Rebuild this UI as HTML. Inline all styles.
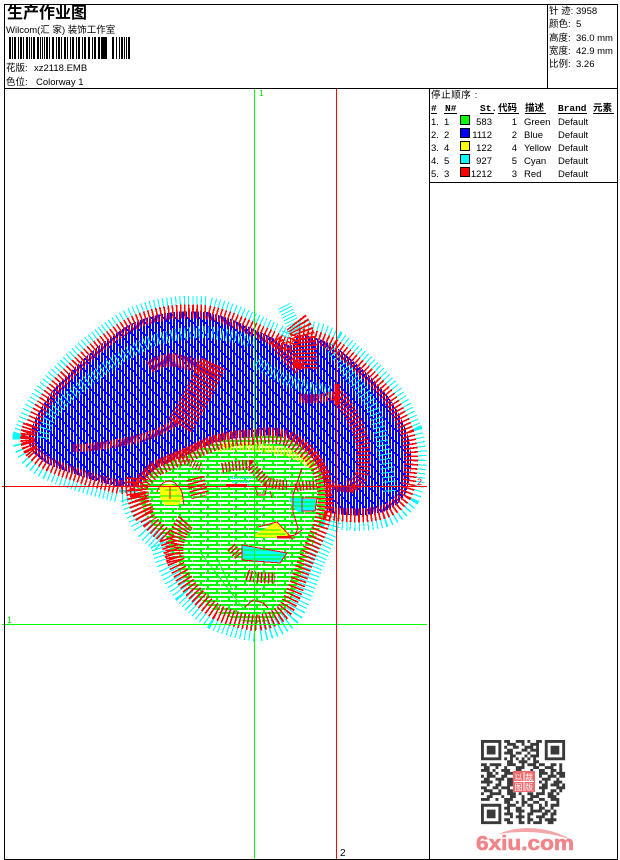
<!DOCTYPE html>
<html><head><meta charset="utf-8"><style>
html,body{margin:0;padding:0;background:#fff;width:620px;height:860px;overflow:hidden}
svg{display:block}
text{font-family:"Liberation Sans","Noto Sans CJK SC",sans-serif;font-size:9.5px;fill:#000}
.b{font-weight:bold}
.m{font-family:"Liberation Mono",monospace;font-weight:bold}
</style></head><body>
<svg width="620" height="860" viewBox="0 0 620 860" xmlns="http://www.w3.org/2000/svg" shape-rendering="crispEdges">
<defs>
<pattern id="bl" width="12" height="12" patternUnits="userSpaceOnUse">
<rect width="12" height="12" fill="#0000ff"/>
<path fill="#fff" d="M1 0h1v10H1zM4 0h1v2H4zM4 4h1v8H4zM7 0h1v5H7zM7 7h1v5H7zM10 0h1v8h-1zM10 10h1v2h-1z"/>
</pattern>
<pattern id="gr" width="28" height="8" patternUnits="userSpaceOnUse">
<rect width="28" height="8" fill="#00ff00"/>
<path fill="#fff" d="M0 2h11v2H0zM13 2h15v2H13zM0 6h4v2H0zM6 6h14v2H6zM22 6h6v2h-6zM24 0h1v2h-1zM9 4h1v2H9z"/>
</pattern>
<path id="body" d="M28 438C33 425 36 415 43 405C50 393 58 384 67 375C78 364 88 354 100 345C111 337 121 329 133 323C144 318 155 315 167 313C180 311 194 311 207 312C219 315 229 318 240 323C251 328 262 333 273 338C280 342 286 346 293 345L297 335C310 335 322 339 333 345C343 352 351 359 360 367C370 376 379 385 387 395C396 407 402 419 407 432C410 443 412 454 411 465C410 476 409 486 405 495C399 504 392 509 383 512C372 515 361 516 350 515C342 515 334 514 327 512C325 500 324 487 322 475C319 468 315 461 310 455C303 448 295 442 287 438C275 435 264 435 253 437C241 437 229 439 217 442C206 446 197 450 187 455C177 459 167 463 157 468C150 473 146 479 140 485C133 486 127 487 120 487C107 484 95 481 83 477C72 473 61 470 50 465C44 462 38 458 33 452C30 447 28 443 28 438Z"/>
<path id="head" d="M138 495C141 504 145 514 150 522C155 528 161 532 167 538C170 546 172 554 175 562C179 571 184 580 190 588C198 597 207 606 217 612C230 618 243 622 257 623C267 622 276 618 283 612C288 607 290 601 293 595C298 583 302 570 307 558C311 548 316 538 320 528C322 521 324 515 325 508C326 497 325 485 322 475C319 468 315 461 310 455C303 448 295 442 287 438C275 435 264 435 253 437C241 437 229 439 217 442C206 446 197 450 187 455C177 459 167 463 157 468C150 473 144 480 140 485C138 488 137 492 138 495Z"/>
</defs>
<rect width="620" height="860" fill="#fff"/>

<!-- embroidery -->
<g fill="none">
<use href="#body" stroke="#00ffff" stroke-width="31" stroke-dasharray="1.1 2.9"/>
<use href="#head" stroke="#00ffff" stroke-width="37" stroke-dasharray="1.1 2.9"/>
<use href="#body" fill="url(#bl)"/>
<path d="M284 306L298 334" stroke="#00ffff" stroke-width="14" stroke-dasharray="1 2.2"/>
<!-- inner cyan speckle -->
<g stroke="#00ffff" stroke-dasharray="1 3.6">
<path d="M43 438C45 425 50 416 57 408C70 395 85 383 100 372C115 360 132 350 150 342C167 336 183 333 200 332C220 333 237 337 253 342" stroke-width="12"/>
<path d="M257 362C270 372 285 380 300 385C312 388 322 390 333 392" stroke-width="12"/>
<path d="M347 372C357 383 366 395 373 408C378 420 381 432 383 445C386 462 389 478 390 495" stroke-width="13"/>
<path d="M330 345L348 372" stroke-width="12"/>
</g>
<!-- red ring -->
<use href="#body" stroke="#ff0000" stroke-width="14" stroke-dasharray="1.6 2.4"/>
<path d="M30 425C26 435 26 445 32 452" stroke="#ff0000" stroke-width="14" stroke-dasharray="1.6 1.4"/>
<!-- red interior bands -->
<g stroke="#ff0000">
<path d="M73 448C93 448 113 444 133 440C150 436 165 430 180 420" stroke-width="8" stroke-dasharray="1.6 1.8"/>
<path d="M150 367C158 362 166 360 173 360C183 362 192 364 200 367C206 368 212 370 217 372" stroke-width="13" stroke-dasharray="1.5 1.9"/>
<path d="M180 425C193 405 203 385 214 362" stroke-width="27" stroke-dasharray="1.6 2.2"/>
<path d="M296 322C304 332 306 345 305 370" stroke-width="24" stroke-dasharray="1.6 2"/>
<path d="M275 340C282 350 290 360 300 368" stroke-width="14" stroke-dasharray="1.6 2"/>
<path d="M293 362L302 368" stroke-width="5"/>
<path d="M300 398C312 400 325 398 337 395" stroke-width="9" stroke-dasharray="1.5 1.8"/>
<path d="M337 395C344 402 349 410 353 418C358 427 361 436 363 445C364 455 364 465 362 475C358 482 353 486 347 488" stroke-width="14" stroke-dasharray="1.5 2.2"/>
<path d="M337 384V405" stroke-width="5"/>
<path d="M332 484C340 490 350 490 358 486" stroke-width="7" stroke-dasharray="1.5 1.5"/>
</g>
<!-- green head -->
<use href="#head" fill="url(#gr)"/>
<!-- yellow top band -->
<path d="M217 448C230 446 242 446 253 447C265 448 276 450 287 452C297 456 306 460 313 467" stroke="#ffff00" stroke-width="8" stroke-dasharray="1.5 1.7"/>
<!-- red head ring -->
<use href="#head" stroke="#ff0000" stroke-width="16" stroke-dasharray="1.6 2.5"/>
<path d="M137 478C136 490 138 505 146 516" stroke="#ff0000" stroke-width="22" stroke-dasharray="1.5 2.2"/>
<g stroke="#ff0000">
<path d="M180 458L202 468" stroke-width="8" stroke-dasharray="1 2"/>
<path d="M195 478L200 497" stroke-width="18" stroke-dasharray="1.5 2.3"/>
<path d="M186 522C176 533 172 548 176 562" stroke-width="18" stroke-dasharray="1.5 1.9"/>
<path d="M222 468C232 466 241 465 250 465C256 471 261 477 267 482C274 484 280 485 287 485" stroke-width="10" stroke-dasharray="1.4 2"/>
<path d="M296 488C303 485 310 486 317 485" stroke-width="9" stroke-dasharray="1.4 2"/>
<path d="M231 547L240 557" stroke-width="10" stroke-dasharray="1.4 2"/>
<path d="M247 575C256 578 266 578 275 578" stroke-width="11" stroke-dasharray="1.5 2"/>
</g>
<!-- thin lower-left green lines -->
<path d="M200 552L243 608M218 560L232 590" stroke="#00ff00" stroke-width="1"/>
<!-- yellow/cyan patches -->
<path d="M160 486L170 484L180 488L183 500L178 505H165L160 498Z" fill="#ffff00"/>
<path d="M160 496h22M162 501h18M165 490h12" stroke="#00ff00" stroke-width="1"/>
<path d="M157 492C160 483 165 481 170 481C176 482 180 488 182 492L184 505" stroke="#ff0000" stroke-width="1"/>
<path d="M170 487V499" stroke="#ff0000" stroke-width="1"/>
<path d="M253 535L277 522L290 535L287 538L255 537Z" fill="#ffff00"/>
<path d="M255 530h26M258 534h28" stroke="#00ff00" stroke-width="1"/>
<path d="M258 527L277 522L290 536L295 535L302 530M277 538H295" stroke="#ff0000" stroke-width="1"/>
<path d="M277 537h14" stroke="#ff0000" stroke-width="2"/>
<path d="M242 545L287 553L280 563L242 560Z" fill="#00ffff"/>
<path d="M243 550h32M243 555h42M243 559h38" stroke="#00ff00" stroke-width="1"/>
<path d="M242 545L287 553L280 563L242 560Z" stroke="#ff0000" stroke-width="1"/>
<path d="M290 498H304V512H298L292 505Z" fill="#00ffff"/>
<path d="M304 499H316V511H304Z" fill="#00ffff"/>
<path d="M292 502h24M294 506h22" stroke="#00ff00" stroke-width="1"/>
<path d="M302 498H317L315 511H302Z" stroke="#ff0000" stroke-width="1"/>
<path d="M229 478h24M232 482h18M236 486h16" stroke="#00ffff" stroke-width="2" stroke-dasharray="1.4 1.2"/>
<g stroke="#ff0000" stroke-width="1">
<path d="M226 485H247" stroke-width="2"/>
<path d="M255 487L258 495H265L267 485M270 491L272 498"/>
<path d="M302 468L293 495V512L298 528L295 535L277 538"/>
<path d="M245 607L253 600L263 603L268 608"/>
</g>
</g>

<!-- guide lines -->
<path d="M254.5 89V859M2 624.5H427" stroke="#00ff00" stroke-width="1"/>
<path d="M336.5 89V859M2 486.5H427" stroke="#ff0000" stroke-width="1"/>
<text x="259" y="96" style="fill:#00e000;font-size:8.5px">1</text>
<text x="7" y="623" style="fill:#00e000;font-size:9px">1</text>
<text x="340" y="856" style="font-size:10px">2</text>
<text x="417" y="485" style="fill:#ff0000;font-size:9px">2</text>

<!-- frame -->
<path d="M4.5 4.5H617.5V859.5H4.5ZM4.5 88.5H617.5M547.5 4.5V88.5M429.5 88.5V859.5M429.5 182.5H617.5" fill="none" stroke="#000" stroke-width="1"/>

<!-- header -->
<text x="7" y="18" class="b" style="font-size:16px">生产作业图</text>
<text x="6" y="33">Wilcom(汇 家) 装饰工作室</text>
<path stroke="#000" fill="none" stroke-width="1" d="M9.5 37v22M10.5 37v22M12.5 37v22M14.5 37v22M15.5 37v22M18.5 37v22M20.5 37v22M21.5 37v22M23.5 37v22M26.5 37v22M27.5 37v22M29.5 37v22M31.5 37v22M33.5 37v22M34.5 37v22M37.5 37v22M38.5 37v22M40.5 37v22M42.5 37v22M44.5 37v22M46.5 37v22M47.5 37v22M49.5 37v22M52.5 37v22M53.5 37v22M56.5 37v22M58.5 37v22M59.5 37v22M61.5 37v22M64.5 37v22M65.5 37v22M67.5 37v22M70.5 37v22M72.5 37v22M73.5 37v22M76.5 37v22M78.5 37v22M79.5 37v22M82.5 37v22M84.5 37v22M85.5 37v22M88.5 37v22M89.5 37v22M92.5 37v22M94.5 37v22M95.5 37v22M98.5 37v22M99.5 37v22M101.5 37v22M102.5 37v22M103.5 37v22M104.5 37v22M105.5 37v22M106.5 37v22M112.5 37v22M113.5 37v22M116.5 37v22M119.5 37v22M121.5 37v22M122.5 37v22M124.5 37v22M126.5 37v22M128.5 37v22M129.5 37v22"/>
<text x="6" y="71">花版:</text><text x="34" y="71">xz2118.EMB</text>
<text x="6" y="85">色位:</text><text x="36" y="85">Colorway 1</text>

<text x="549" y="14">针 迹:</text><text x="576" y="14">3958</text>
<text x="549" y="27">颜色:</text><text x="576" y="27">5</text>
<text x="549" y="41">高度:</text><text x="576" y="41">36.0 mm</text>
<text x="549" y="54">宽度:</text><text x="576" y="54">42.9 mm</text>
<text x="549" y="67">比例:</text><text x="576" y="67">3.26</text>

<!-- table -->
<text x="431" y="98" style="letter-spacing:.6px">停止顺序 :</text>
<text x="431" y="111" class="m">#</text>
<text x="445" y="111" class="m">N#</text>
<text x="480" y="111" class="m">St.</text>
<text x="498" y="111" class="b">代码</text>
<text x="525" y="111" class="b">描述</text>
<text x="558" y="111" class="m">Brand</text>
<text x="593" y="111" class="b">元素</text>
<path stroke="#000" d="M431 113.5h6M444 113.5h13M480 113.5h14M498 113.5h21M525 113.5h21M558 113.5h29M593 113.5h21"/>
<g stroke="#000" stroke-width="1">
<rect x="460.5" y="115.5" width="9" height="9" fill="#00ff00"/>
<rect x="460.5" y="128.5" width="9" height="9" fill="#0000ff"/>
<rect x="460.5" y="141.5" width="9" height="9" fill="#ffff00"/>
<rect x="460.5" y="154.5" width="9" height="9" fill="#00ffff"/>
<rect x="460.5" y="167.5" width="9" height="9" fill="#ff0000"/>
</g>
<text x="431" y="125">1.</text><text x="444" y="125">1</text><text x="492" y="125" text-anchor="end">583</text><text x="517" y="125" text-anchor="end">1</text><text x="524" y="125">Green</text><text x="558" y="125">Default</text>
<text x="431" y="138">2.</text><text x="444" y="138">2</text><text x="492" y="138" text-anchor="end">1112</text><text x="517" y="138" text-anchor="end">2</text><text x="524" y="138">Blue</text><text x="558" y="138">Default</text>
<text x="431" y="151">3.</text><text x="444" y="151">4</text><text x="492" y="151" text-anchor="end">122</text><text x="517" y="151" text-anchor="end">4</text><text x="524" y="151">Yellow</text><text x="558" y="151">Default</text>
<text x="431" y="164">4.</text><text x="444" y="164">5</text><text x="492" y="164" text-anchor="end">927</text><text x="517" y="164" text-anchor="end">5</text><text x="524" y="164">Cyan</text><text x="558" y="164">Default</text>
<text x="431" y="177">5.</text><text x="444" y="177">3</text><text x="492" y="177" text-anchor="end">1212</text><text x="517" y="177" text-anchor="end">3</text><text x="524" y="177">Red</text><text x="558" y="177">Default</text>

<!-- QR -->
<g transform="translate(481,740) scale(2.9)" fill="none" stroke="#3a3a3a" stroke-width="1" shape-rendering="auto">
<path d="M0 .5h7M8 .5h2m2 0h3m1 0h1m2 0h2M22 .5h7
M0 1.5h1m5 0h1M9 1.5h3m2 0h1m2 0h3M22 1.5h1m5 0h1
M0 2.5h1m1 0h3m1 0h1M8 2.5h1m2 0h2m2 0h3m1 0h1M22 2.5h1m1 0h3m1 0h1
M0 3.5h1m1 0h3m1 0h1M9 3.5h2m3 0h2m1 0h3M22 3.5h1m1 0h3m1 0h1
M0 4.5h1m1 0h3m1 0h1M8 4.5h3m1 0h2m2 0h1m2 0h1M22 4.5h1m1 0h3m1 0h1
M0 5.5h1m5 0h1M10 5.5h2m3 0h1m1 0h3M22 5.5h1m5 0h1
M0 6.5h7m1 0h1m1 0h1m1 0h1m1 0h1m1 0h1m1 0h1M22 6.5h7
M9 7.5h2m2 0h3m2 0h2
M0 8.5h2m1 0h4m2 0h3m2 0h1m1 0h3m1 0h2m2 0h2m1 0h1
M1 9.5h2m2 0h1m2 0h1m3 0h3m3 0h2m2 0h3m2 0h1
M0 10.5h3m1 0h1m2 0h3m2 0h2m3 0h1m2 0h2m2 0h2m1 0h1
M2 11.5h2m1 0h1m2 0h3M20 11.5h3m1 0h1m1 0h3
M0 12.5h1m1 0h3m2 0h2M20 12.5h1m2 0h3m1 0h2
M1 13.5h2m2 0h3m1 0h2M21 13.5h3m2 0h1
M0 14.5h4m2 0h1m2 0h2M20 14.5h1m1 0h1m2 0h3
M2 15.5h1m2 0h2m2 0h2M21 15.5h2m1 0h3m1 0h1
M0 16.5h2m2 0h2m1 0h3M20 16.5h3m3 0h3
M1 17.5h3m2 0h1m2 0h2M21 17.5h1m2 0h2m1 0h1
M0 18.5h1m2 0h4m2 0h3m1 0h1m2 0h2m1 0h3m1 0h2m1 0h1
M2 19.5h2m3 0h1m2 0h2m2 0h1m2 0h3m3 0h3
M0 20.5h3m2 0h1m2 0h3m3 0h1m1 0h2m2 0h2m2 0h3
M8 21.5h2m2 0h1m1 0h2m2 0h2m2 0h1m3 0h1
M0 22.5h7m2 0h3m2 0h1m1 0h2m2 0h1m1 0h1m1 0h3
M0 23.5h1m5 0h1m1 0h2m2 0h2m3 0h1m2 0h2m2 0h1
M0 24.5h1m1 0h3m1 0h1m2 0h1m2 0h3m2 0h4m1 0h2m1 0h1
M0 25.5h1m1 0h3m1 0h1m1 0h3m2 0h1m2 0h2m3 0h2m1 0h2
M0 26.5h1m1 0h3m1 0h1m3 0h1m1 0h3m1 0h1m2 0h3m2 0h1
M0 27.5h1m5 0h1m1 0h2m3 0h1m2 0h2m2 0h1m1 0h4
M0 28.5h7m2 0h2m2 0h2m1 0h1m1 0h3m2 0h2"/>
</g>
<g shape-rendering="auto">
<rect x="513" y="771" width="22" height="21" fill="#ee6a6f"/>
<path d="M524 772v19M514 781.5h20" stroke="#fff" stroke-width="1"/>
<text x="514.5" y="780" style="font-size:8px;fill:#fff">以</text>
<text x="525" y="780" style="font-size:8px;fill:#fff">裁</text>
<text x="514.5" y="790" style="font-size:8px;fill:#fff">图</text>
<text x="525" y="790" style="font-size:8px;fill:#fff">版</text>
<path d="M498 834C520 825 548 826 572 840C550 832 525 830 498 834Z" fill="#f3a6a8"/>
<text x="476" y="850" textLength="98" lengthAdjust="spacingAndGlyphs" style="font-size:20px;font-weight:bold;fill:#f08488;stroke:#f08488;stroke-width:.6px">6xiu.com</text>
</g>
</svg>
</body></html>
